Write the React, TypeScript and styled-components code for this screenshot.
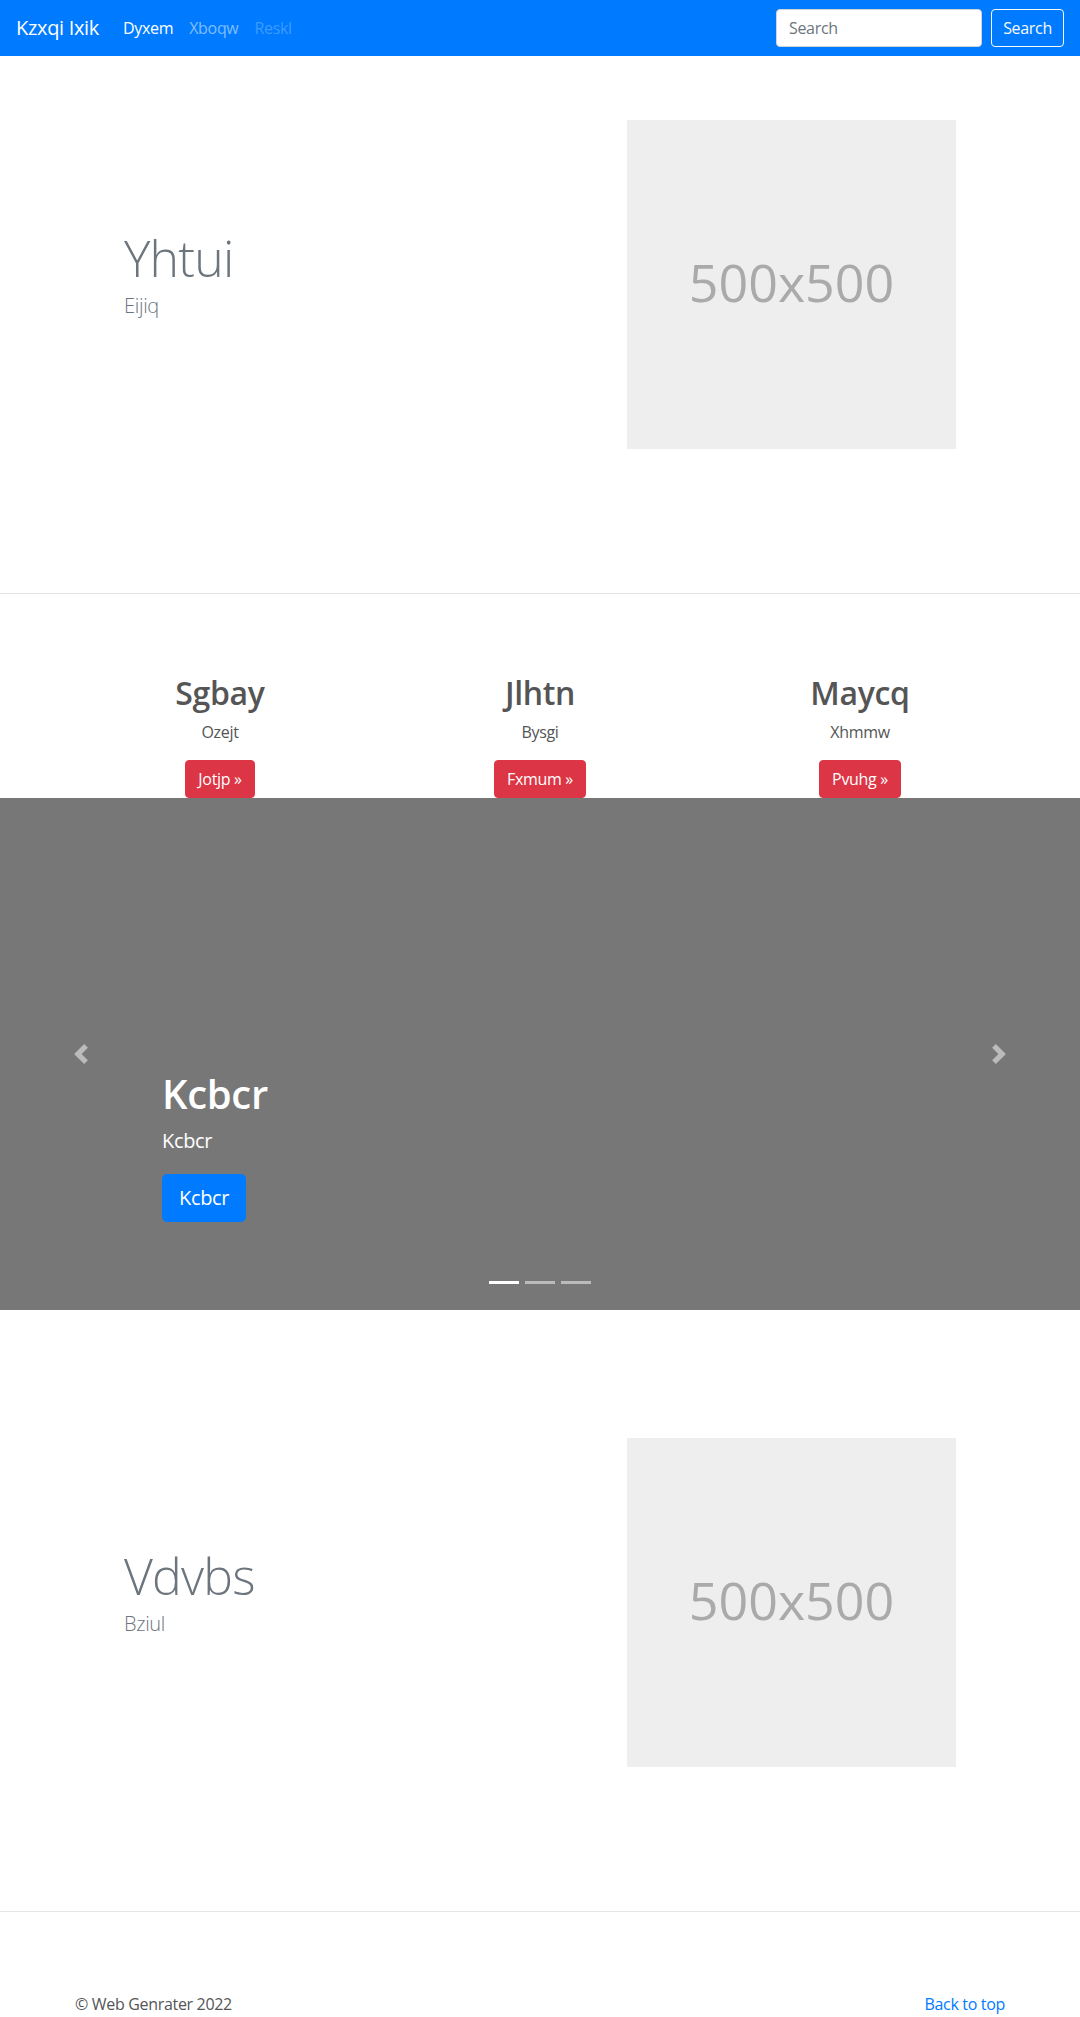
import React from "react";
import styled, { createGlobalStyle } from "styled-components";

const GlobalStyle = createGlobalStyle`
  *, *::before, *::after { box-sizing: border-box; }
  html, body { margin: 0; padding: 0; }
  body {
    font-family: "Open Sans", "Noto Sans", "Liberation Sans", Arial, sans-serif;
    font-size: 16px;
    line-height: 1.5;
    letter-spacing: -0.02em;
    color: #212529;
    background: #fff;
  }
`;

/* ---------- Navbar ---------- */
const Navbar = styled.nav`
  display: flex;
  align-items: center;
  height: 56px;
  padding: 8px 16px;
  background: #007bff;
`;

const Brand = styled.a`
  color: #fff;
  font-size: 20px;
  line-height: 30px;
  padding: 5px 0;
  margin-right: 16px;
  text-decoration: none;
  white-space: nowrap;
`;

const NavList = styled.ul`
  display: flex;
  list-style: none;
  margin: 0;
  padding: 0;
`;

type LinkState = "active" | "normal" | "disabled";
const linkColor: Record<LinkState, string> = {
  active: "#fff",
  normal: "rgba(255,255,255,.5)",
  disabled: "rgba(255,255,255,.25)",
};

const NavLink = styled.a<{ $state: LinkState }>`
  display: block;
  padding: 8px;
  font-size: 16px;
  line-height: 24px;
  color: ${(p) => linkColor[p.$state]};
  text-decoration: none;
`;

const SearchForm = styled.form`
  margin-left: auto;
  display: flex;
  align-items: center;
`;

const SearchInput = styled.input`
  width: 206px;
  height: 38px;
  padding: 6px 12px;
  font-family: inherit;
  font-size: 16px;
  line-height: 24px;
  letter-spacing: -0.02em;
  color: #495057;
  background: #fff;
  border: 1px solid #ced4da;
  border-radius: 4px;
  margin-right: 9px;
  outline: none;
  &::placeholder { color: #6c757d; }
`;

const OutlineButton = styled.button`
  width: 73px;
  height: 38px;
  padding: 6px 0;
  font-family: inherit;
  font-size: 16px;
  line-height: 24px;
  letter-spacing: -0.02em;
  color: #f8f9fa;
  background: transparent;
  border: 1px solid #f8f9fa;
  border-radius: 4px;
  text-align: center;
`;

/* ---------- Featurette hero ---------- */
const Hero = styled.section`
  border-bottom: 1px solid rgba(0, 0, 0, 0.1);
`;

const HeroInner = styled.div<{ $top: number }>`
  width: 960px;
  margin: 0 auto;
  padding: ${(p) => p.$top}px 64px 144px;
  display: grid;
  grid-template-columns: 1fr 329px;
  align-items: center;
`;

const HeroText = styled.div``;

const HeroTitle = styled.h2`
  margin: 0 0 8px;
  font-size: 50px;
  font-weight: 300;
  line-height: 1;
  letter-spacing: -0.8px;
  color: #6c757d;
`;

const Lead = styled.p`
  margin: 0 0 16px;
  font-size: 20px;
  font-weight: 300;
  line-height: 30px;
  color: #6c757d;
`;

const Placeholder = styled.div`
  width: 329px;
  height: 329px;
  background: #eee;
  color: #aaa;
  display: flex;
  align-items: center;
  justify-content: center;
  font-family: "Open Sans", sans-serif;
  font-size: 52px;
  letter-spacing: 0;
  padding-bottom: 6px;
`;

/* ---------- Features ---------- */
const Features = styled.section`
  padding-top: 80px;
`;

const FeatureGrid = styled.div`
  width: 960px;
  margin: 0 auto;
  display: grid;
  grid-template-columns: repeat(3, 1fr);
  text-align: center;
`;

const FeatureCol = styled.div`
  padding: 0 15px;
`;

const FeatureTitle = styled.h2`
  margin: 0 0 8px;
  font-size: 32px;
  font-weight: 600;
  line-height: 1.2;
  color: #555;
`;

const FeatureText = styled.p`
  margin: 0 0 16px;
  font-size: 16px;
  line-height: 24px;
  color: #555;
`;

const ButtonRow = styled.div`
  display: flex;
  justify-content: center;
`;

const DangerButton = styled.a`
  display: block;
  padding: 6px 12px;
  font-size: 16px;
  line-height: 24px;
  color: #fff;
  background: #dc3545;
  border: 1px solid #dc3545;
  border-radius: 4px;
  text-decoration: none;
`;

/* ---------- Carousel ---------- */
const Carousel = styled.section`
  position: relative;
  height: 512px;
  background: #777;
  overflow: hidden;
`;

const Caption = styled.div`
  position: absolute;
  left: 15%;
  right: 15%;
  bottom: 48px;
  padding: 20px 0;
  color: #fff;
  text-align: left;
  z-index: 10;
`;

const CaptionTitle = styled.h1`
  margin: 0 0 8px;
  font-size: 40px;
  font-weight: 600;
  line-height: 48px;
`;

const CaptionText = styled.p`
  margin: 0 0 18px;
  font-size: 20px;
  line-height: 30px;
`;

const CaptionActions = styled.div`
  display: flex;
  margin-bottom: 20px;
`;

const LargeButton = styled.a`
  display: block;
  height: 48px;
  padding: 8px 16px;
  font-size: 20px;
  line-height: 30px;
  color: #fff;
  background: #007bff;
  border: 1px solid #007bff;
  border-radius: 4.8px;
  text-decoration: none;
`;

const Control = styled.a<{ $side: "left" | "right" }>`
  position: absolute;
  top: 0;
  bottom: 0;
  ${(p) => p.$side}: 0;
  width: 15%;
  display: flex;
  align-items: center;
  justify-content: center;
  opacity: 0.5;
  z-index: 5;
`;

const Indicators = styled.ol`
  position: absolute;
  left: 0;
  right: 0;
  bottom: 0;
  display: flex;
  justify-content: center;
  list-style: none;
  margin: 0 0 16px;
  padding: 0;
  z-index: 15;
`;

const Indicator = styled.li<{ $active: boolean }>`
  width: 30px;
  height: 3px;
  margin: 10px 3px;
  background: #fff;
  opacity: ${(p) => (p.$active ? 1 : 0.5)};
`;

/* ---------- Footer ---------- */
const Footer = styled.footer`
  width: 960px;
  margin: 0 auto;
  padding: 80px 15px 0;
  display: flex;
  justify-content: space-between;
`;

const FooterText = styled.p`
  margin: 0 0 16px;
  color: #555;
`;

const FooterLink = styled.a`
  color: #007bff;
  text-decoration: none;
`;

const Chevron = ({ dir }: { dir: "prev" | "next" }) => (
  <svg width="20" height="20" viewBox="0 0 8 8" fill="#fff" aria-hidden="true">
    {dir === "prev" ? (
      <path d="M5.25 0l-4 4 4 4 1.5-1.5L4.25 4l2.5-2.5L5.25 0z" />
    ) : (
      <path d="M2.75 0l-1.5 1.5L3.75 4l-2.5 2.5L2.75 8l4-4-4-4z" />
    )}
  </svg>
);

const features = [
  { title: "Sgbay", text: "Ozejt", btn: "Jotjp" },
  { title: "Jlhtn", text: "Bysgi", btn: "Fxmum" },
  { title: "Maycq", text: "Xhmmw", btn: "Pvuhg" },
];

export default function App() {
  return (
    <>
      <GlobalStyle />
      <Navbar>
        <Brand href="#">Kzxqi Ixik</Brand>
        <NavList>
          <li><NavLink $state="active" href="#">Dyxem</NavLink></li>
          <li><NavLink $state="normal" href="#">Xboqw</NavLink></li>
          <li><NavLink $state="disabled" href="#">Reskl</NavLink></li>
        </NavList>
        <SearchForm onSubmit={(e) => e.preventDefault()}>
          <SearchInput type="text" placeholder="Search" aria-label="Search" />
          <OutlineButton type="submit">Search</OutlineButton>
        </SearchForm>
      </Navbar>

      <Hero>
        <HeroInner $top={64}>
          <HeroText>
            <HeroTitle>Yhtui</HeroTitle>
            <Lead>Eijiq</Lead>
          </HeroText>
          <Placeholder>500x500</Placeholder>
        </HeroInner>
      </Hero>

      <Features>
        <FeatureGrid>
          {features.map((f) => (
            <FeatureCol key={f.title}>
              <FeatureTitle>{f.title}</FeatureTitle>
              <FeatureText>{f.text}</FeatureText>
              <ButtonRow>
                <DangerButton href="#">{f.btn} &raquo;</DangerButton>
              </ButtonRow>
            </FeatureCol>
          ))}
        </FeatureGrid>
      </Features>

      <Carousel>
        <Caption>
          <CaptionTitle>Kcbcr</CaptionTitle>
          <CaptionText>Kcbcr</CaptionText>
          <CaptionActions>
            <LargeButton href="#">Kcbcr</LargeButton>
          </CaptionActions>
        </Caption>
        <Control $side="left" href="#"><Chevron dir="prev" /></Control>
        <Control $side="right" href="#"><Chevron dir="next" /></Control>
        <Indicators>
          <Indicator $active />
          <Indicator $active={false} />
          <Indicator $active={false} />
        </Indicators>
      </Carousel>

      <Hero>
        <HeroInner $top={128}>
          <HeroText>
            <HeroTitle>Vdvbs</HeroTitle>
            <Lead>Bziul</Lead>
          </HeroText>
          <Placeholder>500x500</Placeholder>
        </HeroInner>
      </Hero>

      <Footer>
        <FooterText>&copy; Web Genrater 2022</FooterText>
        <FooterText><FooterLink href="#">Back to top</FooterLink></FooterText>
      </Footer>
    </>
  );
}
